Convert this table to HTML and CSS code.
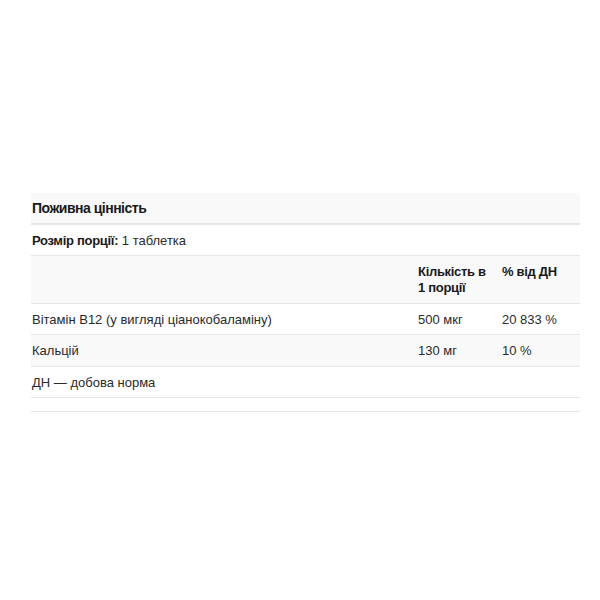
FILE: index.html
```html
<!DOCTYPE html>
<html lang="uk">
<head>
<meta charset="utf-8">
<link rel="stylesheet" href="styles.css">
</head>
<body>
<div class="page">
  <table class="facts">
    <thead>
      <tr class="title-row"><th colspan="3">Поживна цінність</th></tr>
    </thead>
    <tbody>
      <tr class="serving-row"><td colspan="3"><b>Розмір порції:</b> 1 таблетка</td></tr>
      <tr class="head-row gray">
        <td class="name"></td>
        <th class="amt">Кількість в<br>1 порції</th>
        <th class="dv">% від ДН</th>
      </tr>
      <tr>
        <td class="name">Вітамін B12 (у вигляді ціанокобаламіну)</td>
        <td class="amt">500 мкг</td>
        <td class="dv">20 833 %</td>
      </tr>
      <tr class="gray">
        <td class="name">Кальцій</td>
        <td class="amt">130 мг</td>
        <td class="dv">10 %</td>
      </tr>
      <tr class="note-row">
        <td colspan="3">ДН — добова норма</td>
      </tr>
      <tr class="spacer"><td colspan="3"></td></tr>
    </tbody>
  </table>
</div>
</body>
</html>
```

FILE: styles.css
```css
html, body {
  margin: 0;
  background: #ffffff;
}
.page {
  padding: 193px 20px 0 31px;
}
.facts {
  width: 549px;
  border-collapse: collapse;
  font-family: "Liberation Sans", Arial, sans-serif;
  font-size: 13px;
  color: #2a2a2a;
}
.facts th,
.facts td {
  text-align: left;
  vertical-align: top;
  padding: 8px 0 7px 1px;
  line-height: 15px;
  border-bottom: 1px solid #e6e6e6;
}
.facts th {
  font-weight: bold;
  color: #1a1a1a;
  letter-spacing: -0.3px;
}
.facts b {
  font-weight: bold;
  color: #1a1a1a;
  letter-spacing: -0.3px;
}
.title-row th {
  background: #f9f9f9;
  font-size: 14px;
  letter-spacing: -0.5px;
  padding: 7px 0 7px 1px;
  line-height: 16px;
  border-bottom: 2px solid #e6e6e6;
}
.gray td,
.gray th {
  background: #f9f9f9;
}
.gray td {
  padding-bottom: 8px;
}
.head-row th,
.head-row td {
  padding-top: 8px;
  padding-bottom: 7px;
  line-height: 16px;
}
.note-row td {
  padding-top: 8px;
  padding-bottom: 7px;
}
.facts .amt {
  width: 83px;
}
.facts .dv {
  width: 78px;
}
.spacer td {
  height: 13px;
  padding: 0;
}
```
